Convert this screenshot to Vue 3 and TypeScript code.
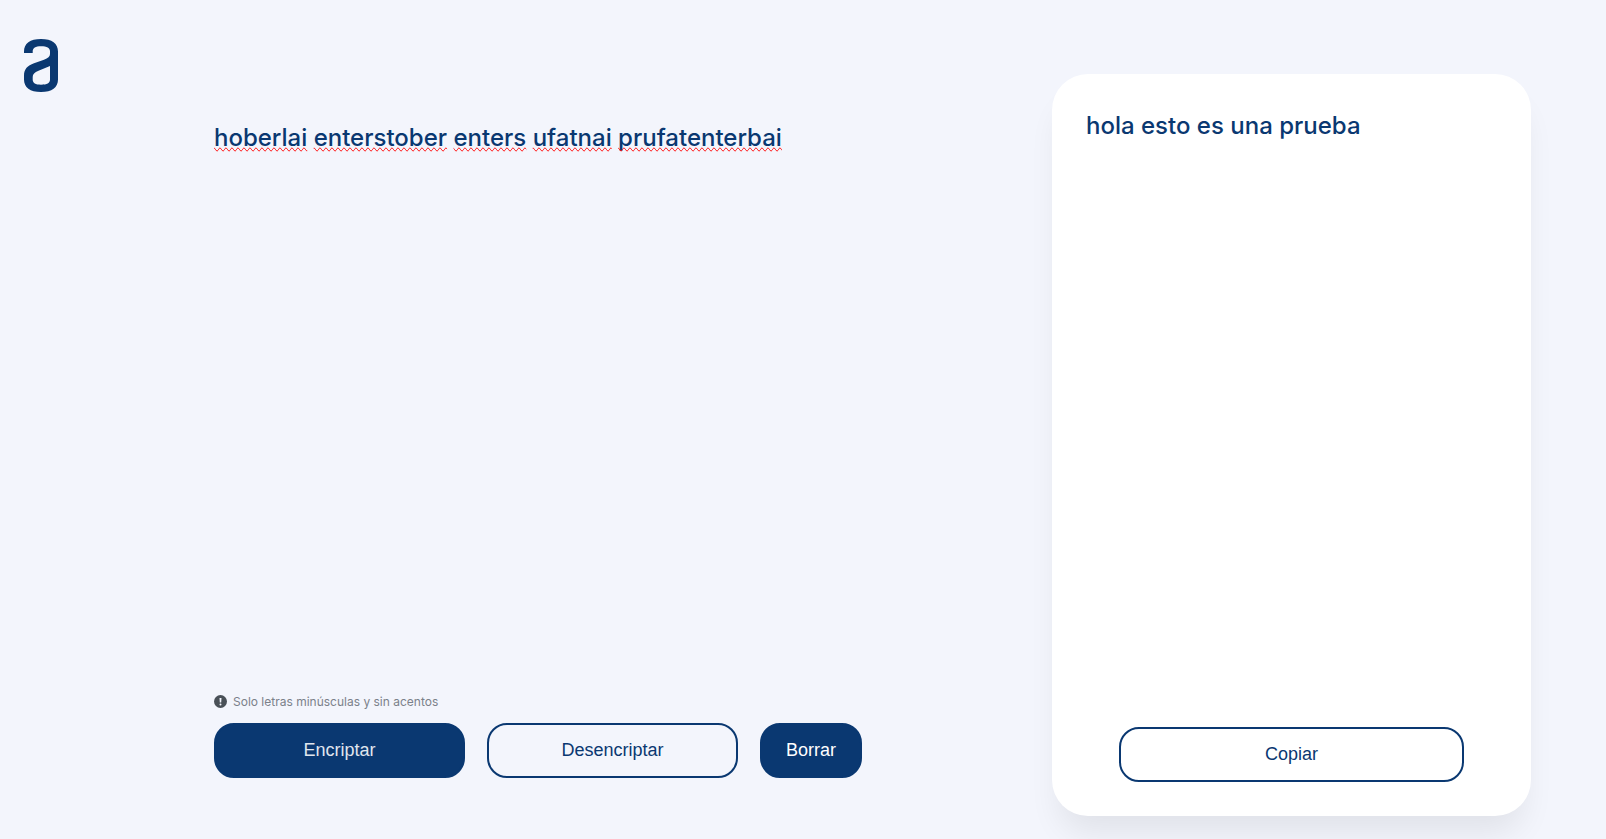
<script setup lang="ts">
import { computed, ref } from 'vue'

const rules: [string, string][] = [
  ['e', 'enter'],
  ['i', 'imes'],
  ['a', 'ai'],
  ['o', 'ober'],
  ['u', 'ufat'],
]

const message = ref('hoberlai enterstober enters ufatnai prufatenterbai')
const result = ref('hola esto es una prueba')

const words = computed(() => message.value.split(/(\s+)/))

function encrypt() {
  result.value = message.value.replace(/[eiaou]/g, (c) => rules.find(([k]) => k === c)![1])
}

function decrypt() {
  result.value = rules.reduce((text, [plain, coded]) => text.split(coded).join(plain), message.value)
}

function clear() {
  message.value = ''
  result.value = ''
}

function copy() {
  navigator.clipboard?.writeText(result.value)
}
</script>

<template>
  <div class="page">
    <header class="brand">
      <svg class="logo" viewBox="0 0 34 53" role="img" aria-label="Logo">
        <path
          fill="currentColor"
          fill-rule="evenodd"
          d="M0 14V12.500C0 4.500 6 0 17 0C28 0 34 4.500 34 12.500V40.500C34 48.500 28 53 17 53C6 53 0 48.500 0 40.500V36.500C0 30 3.500 26.800 10 24.300L20 20.700C24 19.200 26 17.800 26 15V12.500C26 9 23 7.300 17 7.300C11.500 7.300 8.700 9 8.700 12.500V14ZM26 27L14.500 31.800C10.500 33.500 8.700 35.300 8.700 38V40.500C8.700 44 11.500 45.700 17 45.700C23 45.700 26 44 26 40.500Z"
        />
      </svg>
    </header>

    <main class="editor">
      <div class="field">
        <div class="marks" aria-hidden="true">
          <span v-for="(word, i) in words" :key="i" :class="{ misspelt: word.trim() }">{{ word }}</span>
        </div>
        <textarea v-model="message" class="message" aria-label="Ingrese el texto aquí" spellcheck="false"></textarea>
      </div>
      <p class="hint">
        <svg class="hint-icon" viewBox="0 0 14 14" aria-hidden="true">
          <circle cx="6.500" cy="6.500" r="6.500" fill="#495057" />
          <path d="M5.500 3H7.500L7.200 7.500H5.800Z" fill="#f3f5fc" />
          <circle cx="6.500" cy="9.400" r="1" fill="#f3f5fc" />
        </svg>
        Solo letras minúsculas y sin acentos
      </p>
      <div class="actions">
        <button type="button" class="btn solid wide soft" @click="encrypt">Encriptar</button>
        <button type="button" class="btn wide" @click="decrypt">Desencriptar</button>
        <button type="button" class="btn solid" @click="clear">Borrar</button>
      </div>
    </main>

    <aside class="card">
      <output class="result">{{ result }}</output>
      <button type="button" class="btn copy" @click="copy">Copiar</button>
    </aside>
  </div>
</template>

<style>
body {
  margin: 0;
  background: #f3f5fc;
}
</style>

<style scoped>
.page {
  box-sizing: border-box;
  display: flex;
  min-height: 100vh;
  padding: 39px 75px 0 24px;
  overflow: hidden;
  background: #f3f5fc;
  color: #0a3871;
  font-family: Inter, "Open Sans", sans-serif;
}

.brand {
  flex: 0 0 190px;
}

.logo {
  display: block;
  width: 34px;
  height: 53px;
}

.editor {
  flex: 1 1 648px;
  display: flex;
  flex-direction: column;
  margin-right: 190px;
  padding: 81px 0 61px;
}

.field {
  position: relative;
  flex: 1;
  display: flex;
}

.message,
.marks {
  box-sizing: border-box;
  flex: 1;
  margin: 0;
  padding: 0;
  border: 0;
  font: 500 24px/36px Inter, "Open Sans", sans-serif;
  white-space: pre-wrap;
  overflow-wrap: break-word;
}

.message {
  width: 100%;
  outline: 0;
  resize: none;
  background: transparent;
  color: #0a3871;
}

.marks {
  position: absolute;
  inset: 0;
  color: transparent;
  pointer-events: none;
}

.misspelt {
  text-decoration: underline wavy #f00 1px;
  text-decoration-line: spelling-error;
}

.hint {
  display: flex;
  align-items: center;
  gap: 5px;
  margin: 0 0 12px;
  color: #7b818a;
  font-size: 12px;
  line-height: 18px;
  font-weight: 400;
}

.hint-icon {
  width: 14px;
  height: 14px;
}

.actions {
  display: flex;
  gap: 22px;
}

.btn {
  box-sizing: border-box;
  height: 55px;
  padding: 0 24px;
  border: 2px solid #0a3871;
  border-radius: 20px;
  background: transparent;
  color: #0a3871;
  font: 18px "Liberation Sans", Arial, sans-serif;
  cursor: pointer;
}

.wide {
  flex: 1;
}

.solid {
  background: #0a3871;
  color: #fff;
}

.soft {
  color: #e0e6ee;
}

.card {
  box-sizing: border-box;
  flex: 0 1 479px;
  display: flex;
  flex-direction: column;
  margin: 35px 0 23px;
  padding: 34px;
  border-radius: 36px;
  background: #fff;
  box-shadow: 0 24px 32px -8px rgba(0, 0, 0, 0.08);
}

.result {
  flex: 1;
  font: 500 24px/36px Inter, "Open Sans", sans-serif;
}

.copy {
  margin: 0 33px;
}
</style>
